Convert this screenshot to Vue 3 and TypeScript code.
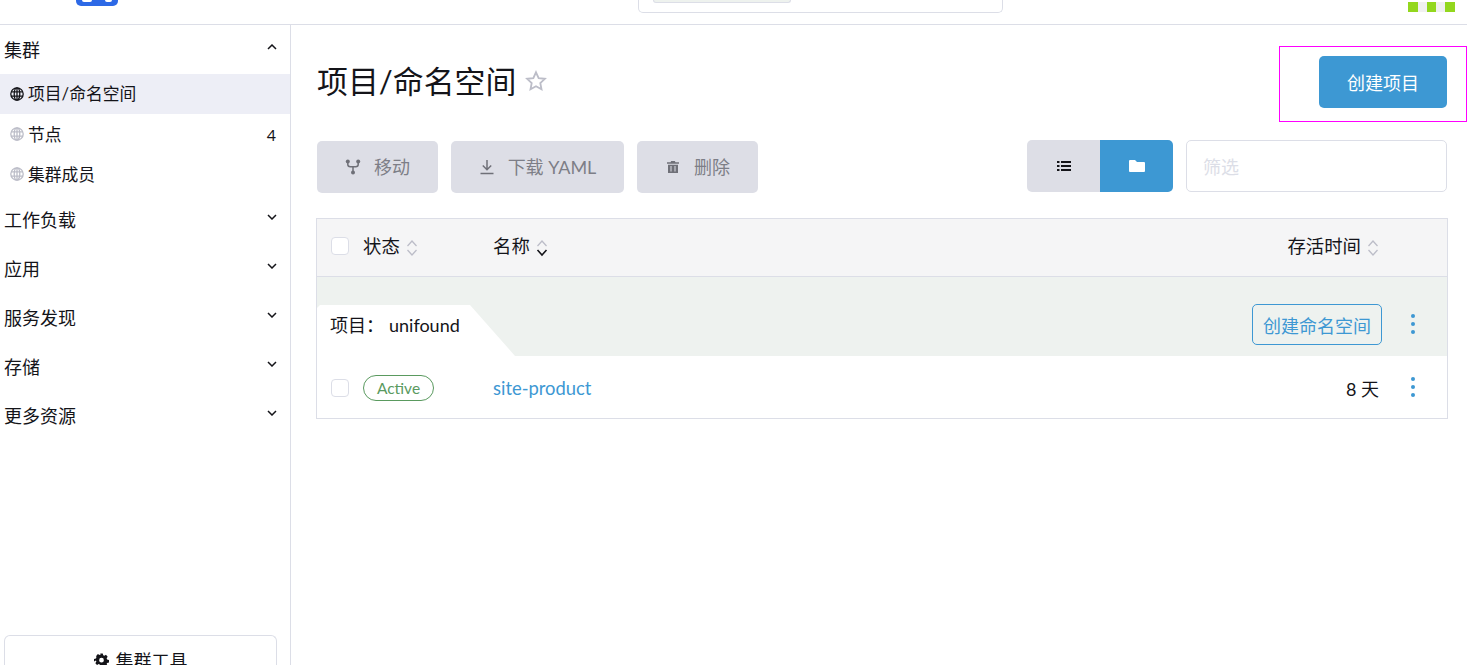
<script setup lang="ts">
const groups = ['工作负载', '应用', '服务发现', '存储', '更多资源']
const items = [
  { label: '项目/命名空间', active: true, count: '' },
  { label: '节点', active: false, count: '4' },
  { label: '集群成员', active: false, count: '' },
]
</script>

<template>
  <div class="page">
    <header class="topbar">
      <div class="logo"><i></i><i></i></div>
      <div class="search"><div class="chip"></div></div>
      <div class="squares"><i></i><b></b><i></i><b></b><i></i></div>
    </header>
    <div class="body">
      <aside class="side">
        <div class="nav">
          <div class="group first">
            <span>集群</span>
            <svg class="chev" viewBox="0 0 10 6"><path d="M1 5l4-4 4 4" /></svg>
          </div>
          <div v-for="it in items" :key="it.label" class="item" :class="{ active: it.active }">
            <svg class="globe" viewBox="0 0 14 14">
              <circle cx="7" cy="7" r="6.2" />
              <ellipse cx="7" cy="7" rx="2.8" ry="6.2" />
              <path d="M1 4.8h12M1 9.2h12M7 1v12" />
            </svg>
            <span class="item-label">{{ it.label }}</span>
            <span class="count">{{ it.count }}</span>
          </div>
          <div v-for="g in groups" :key="g" class="group">
            <span>{{ g }}</span>
            <svg class="chev" viewBox="0 0 10 6"><path d="M1 1l4 4 4-4" /></svg>
          </div>
        </div>
        <div class="tools">
          <svg class="gear" viewBox="0 0 16 16">
            <path fill-rule="evenodd" d="M6.5 0h3l.5 2.200 1.300.6 2-1.100 2 2.300-1.200 1.900.5 1.300 2.400.6v3l-2.400.6-.5 1.300 1.200 1.900-2 2.200-2-1.100-1.300.6-.5 2.200h-3L6 13.300l-1.300-.6-2 1.100-2-2.200 1.200-1.900-.5-1.300L-1 9.800v-3l2.400-.6.500-1.300L1.700 3l2-2.300 2 1.100L7 1.200zM8 5.200a2.800 2.800 0 1 0 0 5.600 2.800 2.800 0 0 0 0-5.600z" transform="translate(.8 .4) scale(.9)" />
          </svg>
          <span>集群工具</span>
        </div>
      </aside>
      <main class="main">
        <div class="title-row">
          <div class="title">
            <h1>项目/命名空间</h1>
            <svg class="star" viewBox="0 0 24 24"><path d="M12 2.500l2.900 6.300 6.800.8-5 4.700 1.300 6.800-6-3.400-6 3.400 1.300-6.800-5-4.700 6.800-.8z" /></svg>
          </div>
          <div class="create-box"><button class="btn primary">创建项目</button></div>
        </div>
        <div class="toolbar">
          <div class="bulk">
            <button class="btn muted w121">
              <svg class="ico" viewBox="0 0 16 16">
                <circle cx="2.800" cy="2.600" r="2" class="fill" /><circle cx="13.200" cy="2.600" r="2" class="fill" /><circle cx="8" cy="13.600" r="2" class="fill" />
                <path d="M2.800 3v2.500c0 1.500 1 2.200 2.500 2.200h5.400c1.500 0 2.500-.7 2.500-2.200V3M8 7.500v6" class="line" />
              </svg>
              <span>移动</span>
            </button>
            <button class="btn muted w173">
              <svg class="ico" viewBox="0 0 16 16">
                <path d="M8 1v9.500M3.800 6.500L8 10.700l4.200-4.200M1.500 14.500h13" class="line" />
              </svg>
              <span>下载 YAML</span>
            </button>
            <button class="btn muted w121 trash">
              <svg class="ico small" viewBox="0 0 14 14">
                <path class="fill" d="M1 2.200h3.500L5.200 1h3.600l.7 1.200H13v1.500H1zM2 4.700h10V13H2zM4.500 6v5.600h1V6zm4 0v5.600h1V6z" fill-rule="evenodd" />
              </svg>
              <span>删除</span>
            </button>
          </div>
          <div class="filters">
            <div class="toggle">
              <div class="seg">
                <svg class="seg-ico" viewBox="0 0 14 12"><path d="M0 1h2.500v2H0zM4 1h10v2H4zM0 5h2.500v2H0zM4 5h10v2H4zM0 9h2.500v2H0zM4 9h10v2H4z" /></svg>
              </div>
              <div class="seg on">
                <svg class="seg-ico" viewBox="0 0 16 12"><path d="M1 0h5l2 2h7a1 1 0 0 1 1 1v8a1 1 0 0 1-1 1H1a1 1 0 0 1-1-1V1a1 1 0 0 1 1-1z" /></svg>
              </div>
            </div>
            <input class="filter" placeholder="筛选" />
          </div>
        </div>
        <section class="table">
          <div class="row head">
            <span class="check"></span>
            <div class="th"><span class="th-text">状态</span>
              <svg class="sort" viewBox="0 0 12 18"><path d="M1.500 7L6 2l4.500 5M1.500 11L6 16l4.500-5" /></svg>
            </div>
            <div class="th"><span class="th-text">名称</span>
              <svg class="sort" viewBox="0 0 12 18"><path d="M1.500 7L6 2l4.500 5" /><path class="dark" d="M1.500 11L6 16l4.500-5" /></svg>
            </div>
            <div class="th age"><span class="th-text">存活时间</span>
              <svg class="sort" viewBox="0 0 12 18"><path d="M1.500 7L6 2l4.500 5M1.500 11L6 16l4.500-5" /></svg>
            </div>
            <span></span>
          </div>
          <div class="project">
            <div class="tab">项目：<span class="pname">unifound</span></div>
            <div class="project-actions">
              <button class="outline">创建命名空间</button>
              <span class="dots"><i></i><i></i><i></i></span>
            </div>
          </div>
          <div class="row data">
            <span class="check"></span>
            <div><span class="badge">Active</span></div>
            <a class="link">site-product</a>
            <div class="age-val">8 天</div>
            <span class="dots"><i></i><i></i><i></i></span>
          </div>
        </section>
      </main>
    </div>
  </div>
</template>

<style>
html, body { margin: 0; background: #fff; overflow: hidden; }
</style>

<style scoped>
.page {
  width: 1467px;
  height: 665px;
  overflow: hidden;
  display: flex;
  flex-direction: column;
  color: #141419;
  font-family: Lato, "Noto Sans CJK SC", sans-serif;
  font-size: 18px;
}
.topbar {
  flex: 0 0 25px;
  box-sizing: border-box;
  border-bottom: 1px solid #dcdee7;
  display: flex;
  align-items: flex-start;
}
.logo {
  width: 42px;
  height: 6px;
  margin-left: 76px;
  background: #2d69e6;
  border-radius: 0 0 5px 5px;
  box-sizing: border-box;
  padding-left: 6px;
  display: flex;
  gap: 13px;
}
.logo i { width: 10px; height: 2px; background: #fff; border-radius: 0 0 4px 4px; }
.logo i:last-child { width: 7px; }
.search {
  width: 365px;
  height: 13px;
  margin-left: 520px;
  box-sizing: border-box;
  border: 1px solid #dcdee7;
  border-top: 0;
  border-radius: 0 0 5px 5px;
  padding-left: 14px;
}
.chip {
  width: 138px;
  height: 3px;
  box-sizing: border-box;
  background: #eef2ee;
  border: 1px solid #dcdee7;
  border-top: 0;
  border-radius: 0 0 5px 5px;
}
.squares {
  display: flex;
  margin-left: 405px;
  margin-top: 2px;
  height: 10px;
}
.squares i { width: 9.500px; height: 10px; background: #93d71e; }
.squares b { width: 9px; height: 10px; background: #f0f0f0; }
.body { flex: 1; display: flex; min-height: 0; }
.side {
  flex: 0 0 291px;
  box-sizing: border-box;
  border-right: 1px solid #dcdee7;
  display: flex;
  flex-direction: column;
  justify-content: space-between;
}
.group {
  height: 48.800px;
  display: flex;
  align-items: center;
  justify-content: space-between;
  padding: 0 13px 0 4px;
  line-height: 1;
}
.group.first { height: 49px; }
.chev { width: 10px; height: 6px; margin-top: -6px; fill: none; stroke: #141419; stroke-width: 1.500; }
.item {
  height: 40px;
  display: flex;
  align-items: center;
  padding: 0 14px 0 10px;
  font-size: 16.800px;
  line-height: 20px;
}
.item.active { background: #edeef6; }
.item + .group { margin-top: 2px; }
.globe { width: 14px; height: 14px; margin-right: 4px; fill: none; stroke: #bcbdc8; stroke-width: 1.300; }
.item.active .globe { stroke: #141419; }
.item-label { flex: 1; margin-top: 2px; }
.item.active .item-label { margin-top: 0; }
.count { font-size: 16px; margin-top: 2px; }
.tools {
  margin: 0 13px -10px 4px;
  height: 40px;
  box-sizing: border-box;
  border: 1px solid #dcdee7;
  border-bottom: 0;
  border-radius: 6px 6px 0 0;
  display: flex;
  align-items: flex-start;
  justify-content: center;
  gap: 7px;
  padding-top: 13px;
  line-height: 24px;
}
.gear { width: 15px; height: 15px; fill: #141419; margin-top: 4px; }
.main { flex: 1; min-width: 0; padding: 0 20px 0 25px; }
.title-row {
  display: flex;
  justify-content: space-between;
  align-items: flex-start;
  margin-top: 21px;
  margin-right: -20px;
  margin-left: 1px;
}
.title { display: flex; align-items: center; gap: 9px; height: 72px; }
h1 { margin: 0; font-size: 30.900px; font-weight: 400; line-height: 72px; }
.star { width: 22px; height: 22px; margin-top: -2px; fill: none; stroke: #bcbdc8; stroke-width: 2; }
.create-box {
  width: 188px;
  height: 76px;
  box-sizing: border-box;
  border: 1px solid #f0f;
  padding: 9px 19px 0 39px;
}
.btn {
  border: 0;
  height: 52px;
  border-radius: 5px;
  font: inherit;
  padding: 0;
  display: flex;
  align-items: center;
  justify-content: center;
}
.primary { width: 128px; background: #3d98d3; color: #fff; }
.toolbar {
  display: flex;
  justify-content: space-between;
  align-items: flex-start;
  margin: 18px 0 25px 1px;
}
.bulk { display: flex; gap: 13px; padding-top: 1px; }
.muted { background: #dddee6; color: #7d7e87; gap: 13px; }
.muted span { margin-top: -2px; }
.trash { gap: 14px; padding-left: 1px; }
.w121 { width: 121px; }
.w173 { width: 173px; }
.ico { width: 16px; height: 16px; }
.ico.small { width: 14px; height: 14px; }
.fill { fill: #6f7078; }
.line { fill: none; stroke: #6f7078; stroke-width: 1.500; }
.filters { display: flex; gap: 13px; }
.toggle { display: flex; border-radius: 5px; overflow: hidden; height: 52px; }
.seg { width: 73px; background: #dddee6; display: flex; align-items: center; justify-content: center; }
.seg.on { background: #3d98d3; }
.seg-ico { width: 14px; height: 12px; fill: #141419; }
.seg.on .seg-ico { width: 16px; fill: #fff; }
.filter {
  width: 261px;
  height: 52px;
  box-sizing: border-box;
  border: 1px solid #dcdee7;
  border-radius: 5px;
  padding: 2px 16px 0;
  font: inherit;
  color: #141419;
  outline: none;
}
.filter::placeholder { color: #dcdee7; opacity: 1; }
.table {
  width: 1132px;
  box-sizing: border-box;
  border: 1px solid #dcdee7;
}
.row {
  display: grid;
  grid-template-columns: 46px 130px 1fr 104px 67px;
  align-items: center;
}
.head { height: 58px; padding-bottom: 3px; background: #f5f5f6; border-bottom: 1px solid #dcdee7; box-sizing: border-box; }
.data { height: 62px; padding-top: 2px; box-sizing: border-box; }
.check {
  width: 18px;
  height: 18px;
  margin-left: 14px;
  box-sizing: border-box;
  border: 1px solid #dcdee7;
  border-radius: 4px;
  background: #fff;
}
.th { display: flex; align-items: center; gap: 6px; }
.th-text { margin-top: -3px; font-size: 18.400px; }
.th.age { justify-content: flex-end; padding-right: 1px; }
.sort { width: 12px; height: 18px; margin-top: 3px; fill: none; stroke: #bcbdc8; stroke-width: 1.300; }
.sort .dark { stroke: #141419; stroke-width: 1.600; }
.project {
  height: 79px;
  background: #eef2ef;
  display: flex;
  justify-content: space-between;
  align-items: flex-start;
}
.tab {
  margin-top: 28px;
  width: 198px;
  height: 51px;
  box-sizing: border-box;
  background: #fff;
  padding-left: 13px;
  line-height: 41px;
  clip-path: polygon(0 3px, 3px 0, 153px 0, 198px 51px, 0 51px);
}
.pname { margin-left: 5px; }
.project-actions { display: flex; align-items: center; margin-top: 27px; }
.outline {
  width: 130px;
  height: 41px;
  margin-right: -1px;
  padding: 0;
  box-sizing: border-box;
  border: 1px solid #3d98d3;
  border-radius: 5px;
  background: transparent;
  color: #3d98d3;
  font: inherit;
}
.dots {
  width: 64px;
  height: 20px;
  display: flex;
  flex-direction: column;
  align-items: center;
  justify-content: space-between;
  justify-self: end;
  margin-top: -2px;
  margin-right: 2px;
}
.dots i { width: 4px; height: 4px; border-radius: 50%; background: #3d98d3; }
.badge {
  display: inline-block;
  box-sizing: border-box;
  width: 71px;
  height: 26px;
  line-height: 24px;
  text-align: center;
  border: 1px solid #5a9a5f;
  border-radius: 13px;
  color: #5a9a5f;
  font-size: 15.500px;
}
.link { color: #3d98d3; font-size: 18.400px; }
.age-val { text-align: right; padding-right: 1px; }
</style>
